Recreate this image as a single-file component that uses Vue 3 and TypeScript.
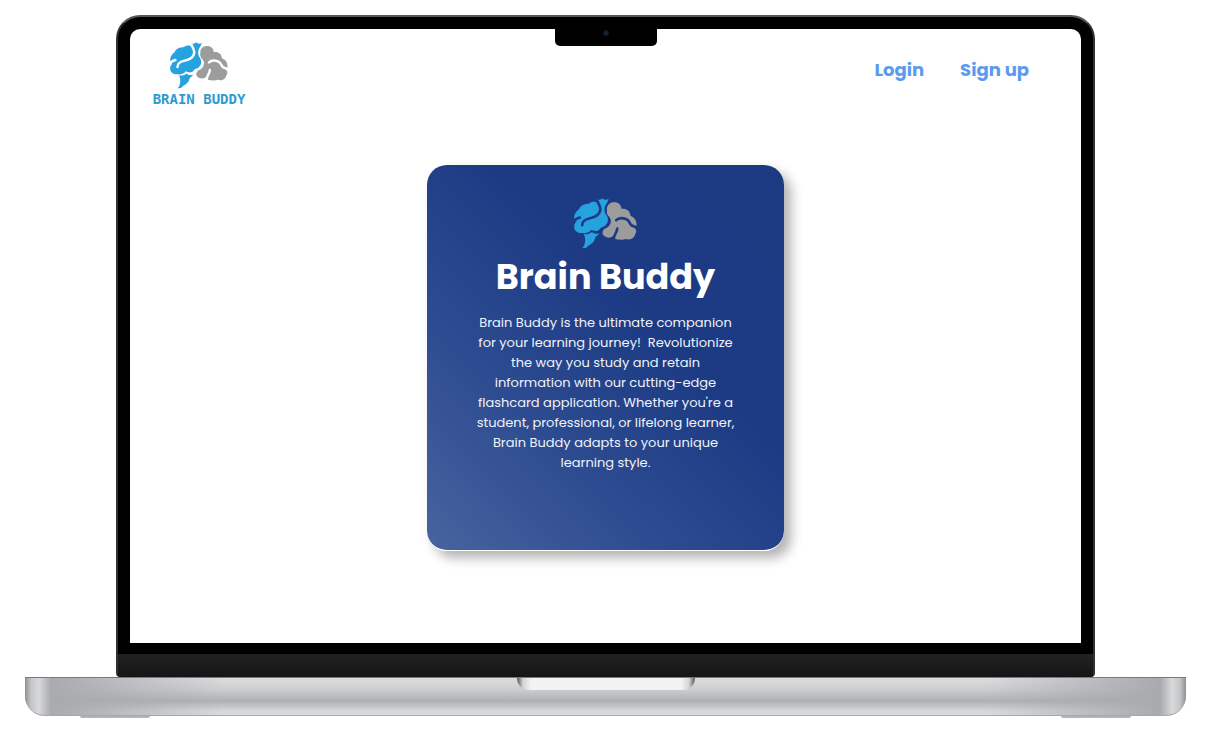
<script setup lang="ts">
const brand = 'Brain Buddy'

const links: { label: string; href: string }[] = [
  { label: 'Login', href: '#login' },
  { label: 'Sign up', href: '#signup' },
]

const lines: string[] = [
  'Brain Buddy is the ultimate companion',
  'for your learning journey!\u00a0 Revolutionize',
  'the way you study and retain',
  'information with our cutting-edge',
  "flashcard application. Whether you're a",
  'student, professional, or lifelong learner,',
  'Brain Buddy adapts to your unique',
  'learning style.',
]
</script>

<template>
  <div class="laptop">
    <svg class="defs" aria-hidden="true">
      <defs>
        <mask id="folds" maskUnits="userSpaceOnUse" x="30" y="15" width="220" height="180">
          <rect x="30" y="15" width="220" height="180" fill="#fff" />
          <g fill="none" stroke="#000" stroke-width="8" stroke-linecap="round">
            <path d="M67 107C67 94 75 90 88 87C107 83 121 73 122 60C122 51 118 44 113 35" />
            <path d="M41 93C47 90 52 86 60 84" />
            <path d="M170 92C178 83 190 85 201 89C211 94 210 104 217 108C223 111 228 110 235 117" />
            <path d="M173 117C173 130 162 134 163 150" />
          </g>
        </mask>
        <symbol id="brain" viewBox="41 25 193 154">
          <g mask="url(#folds)">
            <path fill="#26a3df" d="M43 88C42 72 51 64 58 58C62 46 76 42 87 42C95 35 108 35 116 40L119 37L112 29C118 33 123 31 127 26C134 31 140 32 147 28L142 40C134 48 133 62 137 72C147 83 148 98 137 108C130 114 124 112 119 120C110 128 101 124 94 121C89 131 74 132 64 131C50 131 42 120 43 111C42 103 47 101 50 96Z" />
            <path fill="#9c9c9c" d="M142 60C141 46 151 38 164 38C177 38 185 46 186 58C199 56 212 63 213 79C226 82 233 96 231 111L224 115C232 120 232 129 227 134C225 148 211 153 199 149C191 153 178 151 165 149L161 139C151 149 134 145 129 134C127 123 134 117 143 114C154 106 157 94 150 83C142 77 140 69 142 60Z" />
          </g>
          <path fill="#26a3df" d="M72 133C83 137 91 133 96 128C103 134 110 134 119 132C114 139 107 140 105 149C103 163 87 165 80 175L67 177C77 167 79 149 72 133Z" />
        </symbol>
      </defs>
    </svg>

    <div class="lid">
      <div class="screen">
        <div class="notch"><span class="camera"></span></div>
        <header class="bar">
          <a class="logo" href="#home">
            <svg class="logo-mark" aria-hidden="true"><use href="#brain" /></svg>
            <span class="logo-name">{{ brand }}</span>
          </a>
          <nav class="nav">
            <a v-for="link in links" :key="link.href" :href="link.href">{{ link.label }}</a>
          </nav>
        </header>
        <main class="stage">
          <section class="card">
            <svg class="card-mark" aria-hidden="true"><use href="#brain" /></svg>
            <h1>{{ brand }}</h1>
            <p>
              <template v-for="(line, i) in lines" :key="i">{{ line }}<br v-if="i < lines.length - 1" /></template>
            </p>
          </section>
        </main>
      </div>
      <div class="chin"></div>
    </div>

    <div class="base">
      <div class="body"><div class="groove"></div></div>
      <div class="feet"><span></span><span></span></div>
    </div>
  </div>
</template>

<style>
body {
  background: #fff;
}
</style>

<style scoped>
* {
  box-sizing: border-box;
}

.laptop {
  padding: 15px 26px 0 25px;
  font-family: Poppins, Inter, "Open Sans", sans-serif;
}

.defs {
  position: absolute;
  width: 0;
  height: 0;
}

.lid {
  margin: 0 91px;
  padding: 12px 12px 0;
  border: 2px solid #303232;
  border-top-color: #55595b;
  border-bottom: 0;
  border-radius: 24px 24px 4px 4px;
  background: #000;
}

.screen {
  position: relative;
  display: flex;
  flex-direction: column;
  min-height: calc(100vh - 122px);
  border-radius: 10px 10px 0 0;
  background: #fff;
}

.notch {
  position: absolute;
  top: -1px;
  left: 50%;
  display: flex;
  justify-content: center;
  width: 102px;
  height: 18px;
  margin-left: -51px;
  border-radius: 0 0 5px 5px;
  background: #000;
}

.camera {
  width: 6px;
  height: 6px;
  margin-top: 2px;
  border-radius: 50%;
  background: radial-gradient(circle, #132a40, #0a0d12);
}

.bar {
  display: flex;
  justify-content: space-between;
  padding: 13px 52px 0 22px;
}

.logo {
  display: flex;
  flex-direction: column;
  align-items: center;
  width: 94px;
  text-decoration: none;
}

.logo-mark {
  width: 60px;
  height: 47px;
}

.logo-name {
  color: #2d9bd0;
  font: 700 14px/20px "DejaVu Sans Mono", monospace;
  text-transform: uppercase;
  white-space: nowrap;
}

.nav {
  display: flex;
  gap: 36px;
  padding-top: 16px;
}

.nav a {
  color: #5c9af2;
  font-size: 18px;
  font-weight: 700;
  line-height: 24px;
  text-decoration: none;
}

.stage {
  display: flex;
  justify-content: center;
  padding: 56px 24px 92px;
}

.card {
  display: flex;
  flex-direction: column;
  align-items: center;
  width: 357px;
  min-height: 386px;
  padding: 33px 24px 24px;
  border-bottom: 1px solid #fff;
  border-radius: 20px;
  background: linear-gradient(45deg, #48649f 0%, #2c4b90 32%, #1d3b84 60%, #1c3a82 100%);
  box-shadow: 7px 7px 12px rgba(0, 0, 0, 0.3);
  color: #fff;
  text-align: center;
}

.card-mark {
  width: 65px;
  height: 51px;
}

h1 {
  margin: 8px 0 12px;
  font-size: 35px;
  font-weight: 700;
  line-height: 40px;
}

p {
  margin: 4px 0 0;
  color: #f0f3fa;
  font-size: 13px;
  line-height: 20px;
  white-space: nowrap;
}

.chin {
  height: 34px;
  margin: 0 -12px;
  border-top: 11px solid #000;
  border-radius: 0 0 4px 4px;
  background: linear-gradient(#222, #151515);
}

.body {
  display: flex;
  justify-content: center;
  height: 39px;
  border-top: 1px solid #77787a;
  border-bottom: 1px solid #a6a7a9;
  border-radius: 0 0 20px 20px;
  background:
    linear-gradient(90deg, #8e9093 0, #c4c5c7 6px, #d8d9db 14px, #a9aaae 26px, rgba(165, 166, 170, 0) 200px, rgba(165, 166, 170, 0) calc(100% - 200px), #a9aaae calc(100% - 26px), #d8d9db calc(100% - 14px), #c4c5c7 calc(100% - 6px), #8e9093 100%),
    linear-gradient(#dcdddf 0, #cdced0 30%, #aeb0b3 62%, #d5d6d8 88%, #dadbdd 100%);
}

.groove {
  width: 178px;
  height: 12px;
  border-radius: 0 0 12px 12px;
  background: linear-gradient(90deg, #555 0, #d5d5d5 6px, #f2f2f2 14px, #f2f2f2 calc(100% - 14px), #d5d5d5 calc(100% - 6px), #555 100%);
}

.feet {
  display: flex;
  justify-content: space-between;
  padding: 0 55px;
}

.feet span {
  width: 70px;
  height: 2px;
  border-radius: 0 0 35px 35px;
  background: #b3b4b6;
}
</style>
